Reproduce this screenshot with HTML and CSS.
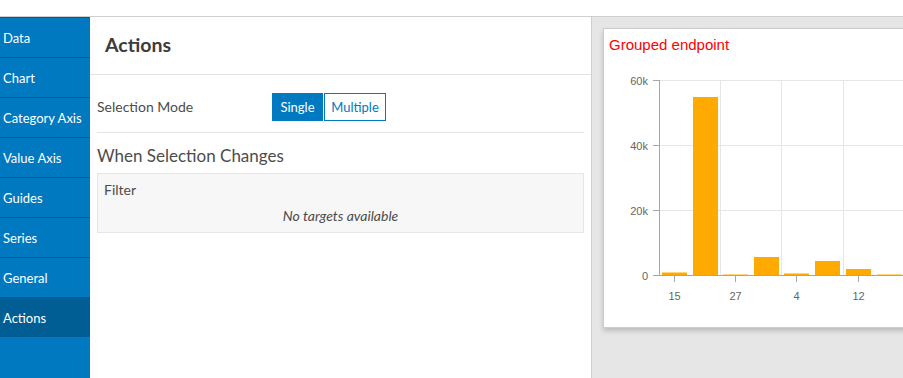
FILE: index.html
```html
<!DOCTYPE html>
<html>
<head>
<meta charset="utf-8">
<link rel="stylesheet" href="styles.css">
</head>
<body>
<div class="topbar"></div>
<div class="layout">
  <nav class="sidebar">
    <div class="nav-item">Data</div>
    <div class="nav-item">Chart</div>
    <div class="nav-item">Category Axis</div>
    <div class="nav-item">Value Axis</div>
    <div class="nav-item">Guides</div>
    <div class="nav-item">Series</div>
    <div class="nav-item">General</div>
    <div class="nav-item active">Actions</div>
  </nav>
  <main class="panel">
    <header class="panel-header"><h1>Actions</h1></header>
    <div class="panel-body">
      <div class="row">
        <span class="row-label">Selection Mode</span>
        <div class="btn-group">
          <button class="btn btn-on">Single</button>
          <button class="btn btn-off">Multiple</button>
        </div>
      </div>
      <h2 class="section-title">When Selection Changes</h2>
      <div class="filter-box">
        <div class="filter-label">Filter</div>
        <div class="filter-empty">No targets available</div>
      </div>
    </div>
  </main>
  <section class="preview">
    <div class="card">
      <div class="chart-title">Grouped endpoint</div>
      <svg class="chart" width="300" height="298" xmlns="http://www.w3.org/2000/svg">
        <g transform="translate(-604,-29)">
          <g stroke="#e6e6e6" stroke-width="1">
            <line x1="660" y1="80.5" x2="910" y2="80.5"/>
            <line x1="660" y1="145.5" x2="910" y2="145.5"/>
            <line x1="660" y1="210.5" x2="910" y2="210.5"/>
            <line x1="720.5" y1="80" x2="720.5" y2="275"/>
            <line x1="781.5" y1="80" x2="781.5" y2="275"/>
            <line x1="843.5" y1="80" x2="843.5" y2="275"/>
          </g>
          <g fill="#ffaa00">
            <rect x="662" y="272.5" width="25" height="3"/>
            <rect x="693" y="97" width="25" height="178.5"/>
            <rect x="723" y="274.5" width="25" height="1"/>
            <rect x="754" y="257" width="25" height="18.5"/>
            <rect x="784" y="273.5" width="25" height="2"/>
            <rect x="815" y="261" width="25" height="14.5"/>
            <rect x="846" y="269" width="25" height="6.5"/>
            <rect x="877" y="274.5" width="25" height="1"/>
          </g>
          <g stroke="#a6a6a6" stroke-width="1">
            <line x1="659.5" y1="80" x2="659.5" y2="276"/>
            <line x1="653" y1="80.5" x2="659" y2="80.5"/>
            <line x1="653" y1="145.5" x2="659" y2="145.5"/>
            <line x1="653" y1="210.5" x2="659" y2="210.5"/>
            <line x1="653" y1="275.5" x2="910" y2="275.5"/>
            <line x1="674.5" y1="276" x2="674.5" y2="282"/>
            <line x1="735.5" y1="276" x2="735.5" y2="282"/>
            <line x1="796.5" y1="276" x2="796.5" y2="282"/>
            <line x1="858.5" y1="276" x2="858.5" y2="282"/>
          </g>
          <g class="axis-text" text-anchor="end">
            <text x="648" y="84.5">60k</text>
            <text x="648" y="149.5">40k</text>
            <text x="648" y="214.5">20k</text>
            <text x="648" y="279.5">0</text>
          </g>
          <g class="axis-text" text-anchor="middle">
            <text x="674.5" y="299.5">15</text>
            <text x="735.5" y="299.5">27</text>
            <text x="796.5" y="299.5">4</text>
            <text x="858.5" y="299.5">12</text>
          </g>
        </g>
      </svg>
    </div>
  </section>
</div>
</body>
</html>
```
FILE: styles.css
```css
* { box-sizing: border-box; }
html, body {
  margin: 0;
  padding: 0;
  width: 903px;
  height: 378px;
  overflow: hidden;
  background: #fff;
  font-family: "Lato", "Noto Sans", sans-serif;
  color: #4c4c4c;
}
.topbar {
  height: 17px;
  border-bottom: 1px solid #cfcfcf;
  background: #fff;
}
.layout {
  display: flex;
  height: 361px;
}
.sidebar {
  width: 90px;
  flex: none;
  background: #0079c1;
  display: flex;
  flex-direction: column;
}
.nav-item {
  height: 40px;
  border-top: 1px solid #005e95;
  color: #fff;
  font-size: 13px;
  padding-left: 3px;
  display: flex;
  align-items: center;
  white-space: nowrap;
}
.nav-item.active {
  background: #005e95;
}
.panel {
  width: 501px;
  flex: none;
  display: flex;
  flex-direction: column;
}
.panel-header {
  height: 58px;
  border-bottom: 1px solid #e3e3e3;
  display: flex;
  align-items: center;
  padding-left: 15px;
}
.panel-header h1 {
  margin: 0;
  font-size: 19.5px;
  font-weight: 700;
  color: #3c3c3c;
  padding-bottom: 2px;
}
.panel-body {
  padding: 0 7px;
}
.row {
  display: flex;
  align-items: center;
  height: 58px;
  border-bottom: 1px solid #e3e3e3;
  padding-top: 6px;
}
.row-label {
  width: 175px;
  font-size: 14px;
}
.btn-group {
  display: flex;
  gap: 1px;
}
.btn {
  font-family: inherit;
  font-size: 13px;
  height: 28px;
  margin: 0;
  border: 1px solid #0079c1;
  cursor: pointer;
  padding: 0;
}
.btn-on {
  width: 51px;
  background: #0079c1;
  color: #fff;
}
.btn-off {
  width: 62px;
  background: #fff;
  color: #0079c1;
}
.section-title {
  margin: 0;
  font-size: 17px;
  font-weight: 400;
  color: #4c4c4c;
  height: 40px;
  display: flex;
  align-items: center;
  padding-top: 4px;
}
.filter-box {
  background: #f7f7f7;
  border: 1px solid #e6e6e6;
  height: 60px;
  padding: 7px 6px 0;
}
.filter-label {
  font-size: 14px;
  line-height: 18px;
}
.filter-empty {
  text-align: center;
  font-style: italic;
  font-size: 14px;
  line-height: 18px;
  margin-top: 8px;
}
.preview {
  flex: 1;
  background: #e6e6e6;
  border-left: 1px solid #cfcfcf;
  padding: 11px 0 0 11px;
  overflow: hidden;
}
.card {
  position: relative;
  width: 310px;
  height: 300px;
  background: #fff;
  border: 1px solid #cccccc;
  box-shadow: 0 3px 5px rgba(0,0,0,0.18);
}
.chart-title {
  position: absolute;
  left: 5px;
  top: 7px;
  font-family: "Liberation Sans", Arial, sans-serif;
  font-size: 15px;
  color: #ff0000;
}
.chart {
  position: absolute;
  left: 0;
  top: 0;
  display: block;
}
.axis-text {
  font-family: "Liberation Sans", Arial, sans-serif;
  font-size: 11px;
  fill: #666666;
}
```
